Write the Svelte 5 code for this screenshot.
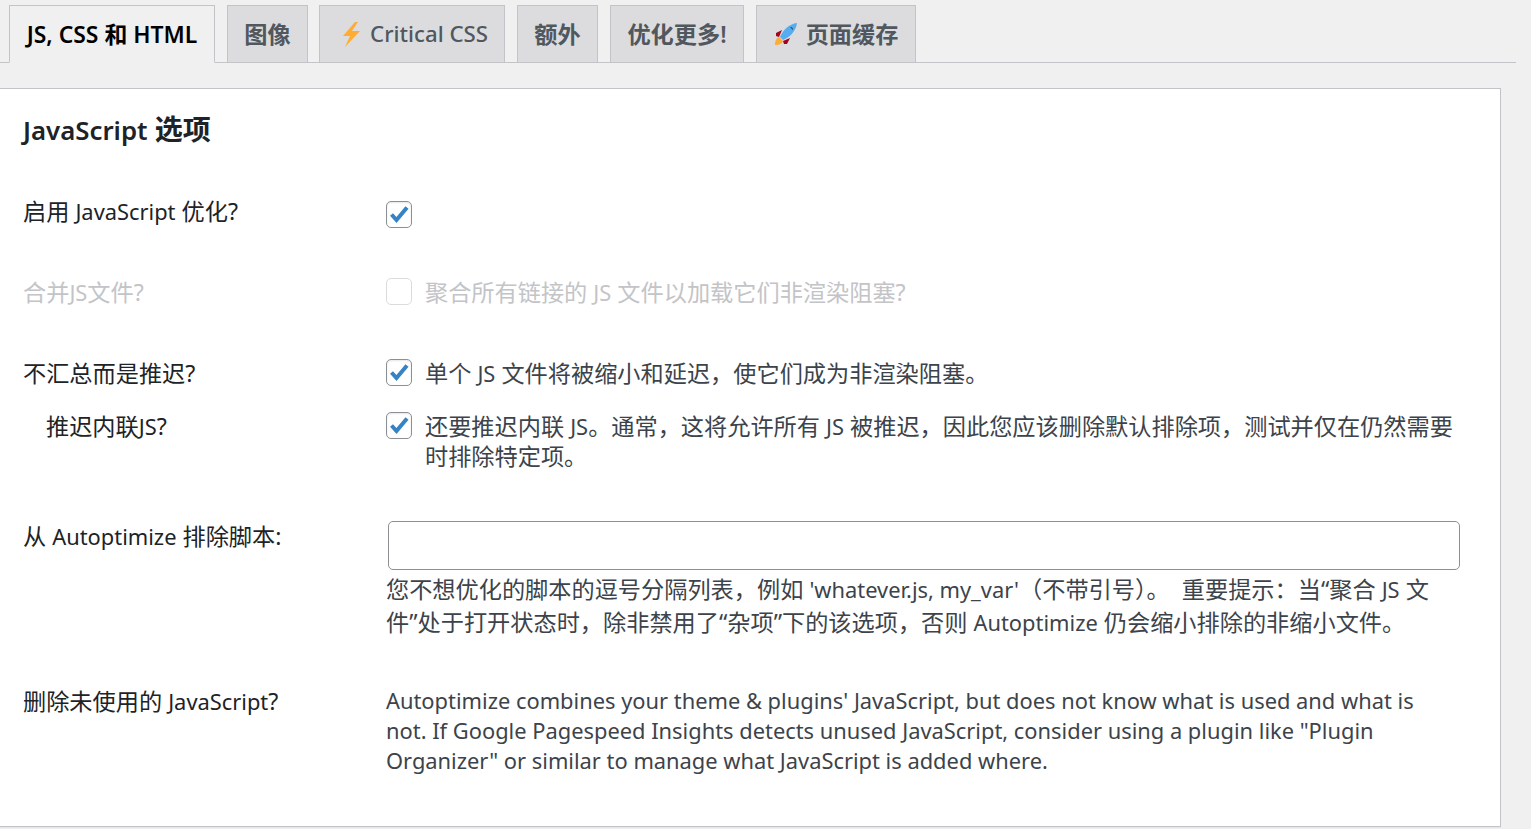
<script>
  const tabs = [
    { label: 'JS, CSS 和 HTML', active: true },
    { label: '图像' },
    { label: 'Critical CSS', icon: 'bolt' },
    { label: '额外' },
    { label: '优化更多!' },
    { label: '页面缓存', icon: 'rocket' }
  ]
</script>

<div class="page">
  <nav class="tabs">
    {#each tabs as tab}
      <a class="tab" class:active={tab.active} href="#top">
        {#if tab.icon === 'bolt'}
          <svg class="bolt" viewBox="0 0 22 25" width="22" height="25" aria-hidden="true">
            <path d="M15 0 3 14h7L5 25 20 9h-8l6-9z" fill="#ffac33" />
          </svg>
        {:else if tab.icon === 'rocket'}
          <svg class="rocket" viewBox="0 0 24 24" width="24" height="24" aria-hidden="true">
            <path d="M1 23c0-4 1-7 4-8l4 4c-1 3-4 4-8 4z" fill="#ffac33" />
            <path d="M2 11l6-3-3 7-3-1zM13 22l3-6-7 3 1 3z" fill="#a0041e" />
            <path d="M6 15C9 8 15 2 23 1c-1 8-7 14-14 17z" fill="#55acee" />
            <path d="M16 5c2 0 3 1 3 3-1-1-2-2-3-3z" fill="#292f33" />
          </svg>
        {/if}
        <span>{tab.label}</span>
      </a>
    {/each}
  </nav>

  <section class="panel">
    <h2><span class="en">JavaScript</span> 选项</h2>

    <div class="row r1">
      <div class="label">启用 <span class="en">JavaScript</span> 优化?</div>
      <div class="field"><span class="check on"><svg viewBox="0 0 24 24"><path d="M4.5 12.5l5 5.5L20 5.5" /></svg></span></div>
    </div>

    <div class="row r2 disabled">
      <div class="label">合并<span class="en">JS</span>文件?</div>
      <div class="field"><span class="check"></span><span>聚合所有链接的 <span class="en">JS</span> 文件以加载它们非渲染阻塞?</span></div>
    </div>

    <div class="row r3">
      <div class="label">不汇总而是推迟?</div>
      <div class="field">
        <span class="check on"><svg viewBox="0 0 24 24"><path d="M4.5 12.5l5 5.5L20 5.5" /></svg></span>
        <span>单个 <span class="en">JS</span> 文件将被缩小和延迟，使它们成为非渲染阻塞。</span>
      </div>
    </div>

    <div class="row r4">
      <div class="label sub">推迟内联<span class="en">JS</span>?</div>
      <div class="field">
        <span class="check on"><svg viewBox="0 0 24 24"><path d="M4.5 12.5l5 5.5L20 5.5" /></svg></span>
        <span>还要推迟内联 <span class="en">JS</span>。通常，这将允许所有 <span class="en">JS</span> 被推迟，因此您应该删除默认排除项，测试并仅在仍然需要<br />时排除特定项。</span>
      </div>
    </div>

    <div class="row r5">
      <div class="label">从 <span class="en">Autoptimize</span> 排除脚本:</div>
      <div class="stack">
        <input type="text" />
        <p class="tall">您不想优化的脚本的逗号分隔列表，例如 <span class="en">'whatever.js, my_var'</span>（不带引号）。&nbsp; 重要提示：当“聚合 <span class="en">JS</span> 文<br />件”处于打开状态时，除非禁用了“杂项”下的该选项，否则 <span class="en">Autoptimize</span> 仍会缩小排除的非缩小文件。</p>
      </div>
    </div>

    <div class="row r6">
      <div class="label">删除未使用的 <span class="en">JavaScript</span>?</div>
      <p class="en">Autoptimize combines your theme &amp; plugins' JavaScript, but does not know what is used and what is<br />not. If Google Pagespeed Insights detects unused JavaScript, consider using a plugin like "Plugin<br />Organizer" or similar to manage what JavaScript is added where.</p>
    </div>
  </section>
</div>

<style>
  :global(body) {
    margin: 0;
    background: #f0f0f1;
    overflow: hidden;
  }

  .page {
    height: 829px;
    font-family: "Noto Sans", "Noto Sans CJK SC", sans-serif;
    font-size: 23.2px;
    line-height: 30px;
    color: #3c434a;
  }

  /* latin runs sit a bit smaller than the cjk ones */
  .en {
    font-size: 0.943em;
  }

  span.en {
    line-height: 0;
  }

  .tabs {
    display: flex;
    gap: 12px;
    width: 1507px;
    height: 57px;
    margin-right: 15px;
    padding: 5px 0 0 9px;
    border-bottom: 1px solid #c3c4c7;
  }

  .tab {
    display: flex;
    align-items: center;
    justify-content: center;
    gap: 8px;
    box-sizing: border-box;
    flex: none;
    height: 58px;
    border: 1px solid #c3c4c7;
    background: #dcdcde;
    color: #50575e;
    font-weight: 600;
    text-decoration: none;
    white-space: nowrap;
  }

  .tab:nth-child(1) { width: 206px; font-size: 22.9px; padding-top: 2px; }
  .tab:nth-child(2) { width: 81px; margin-right: -1px; }
  .tab:nth-child(3) { width: 186px; font-weight: 500; font-size: 22.2px; padding-left: 4px; }
  .tab:nth-child(4) { width: 81px; }
  .tab:nth-child(5) { width: 134px; }
  .tab:nth-child(6) { width: 160px; }

  .tab.active {
    background: #f0f0f1;
    border-bottom-color: #f0f0f1;
    color: #000;
  }

  .panel {
    box-sizing: border-box;
    width: 1501px;
    height: 739px;
    margin-top: 25px;
    padding: 0 40px 0 23px;
    background: #fff;
    border: 1px solid #c3c4c7;
    border-left: 0;
    box-shadow: 0 1px 1px rgba(0, 0, 0, 0.04);
  }

  h2 {
    margin: 0;
    padding-top: 22px;
    font-size: 28px;
    line-height: 36px;
    font-weight: 600;
    color: #1d2327;
  }

  h2 .en {
    font-size: 25.8px;
  }

  .row {
    display: grid;
    grid-template-columns: 363px 1fr;
  }

  .r1 { margin-top: 49px; }
  .r2 { margin-top: 49px; }
  .r3 { margin-top: 51px; }
  .r4 { margin-top: 23px; }
  .r5 { margin-top: 50px; }
  .r6 { margin-top: 47px; }

  .r1 .check {
    margin-top: 5px;
  }

  .label {
    color: #1d2327;
  }

  .label.sub {
    padding-left: 23px;
  }

  .field {
    display: flex;
    gap: 13px;
    align-items: flex-start;
  }

  .check {
    flex: none;
    box-sizing: border-box;
    width: 26px;
    height: 27px;
    margin-top: 1px;
    border: 1px solid #8c8f94;
    border-radius: 5px;
    background: #fff;
    box-shadow: inset 0 1px 2px rgba(0, 0, 0, 0.1);
  }

  .check svg {
    display: block;
    width: 24px;
    height: 24px;
    fill: none;
    stroke: #3582c4;
    stroke-width: 4;
  }

  .disabled .label,
  .disabled .field {
    color: #c3c4c7;
  }

  .disabled .check {
    border-color: #dcdcde;
    box-shadow: none;
  }

  input {
    display: block;
    box-sizing: border-box;
    width: 1072px;
    height: 49px;
    margin: 0 0 3px 2px;
    border: 1px solid #8c8f94;
    border-radius: 5px;
    background: #fff;
  }

  p {
    margin: 0;
    white-space: nowrap;
  }

  .tall {
    line-height: 33px;
  }
</style>
